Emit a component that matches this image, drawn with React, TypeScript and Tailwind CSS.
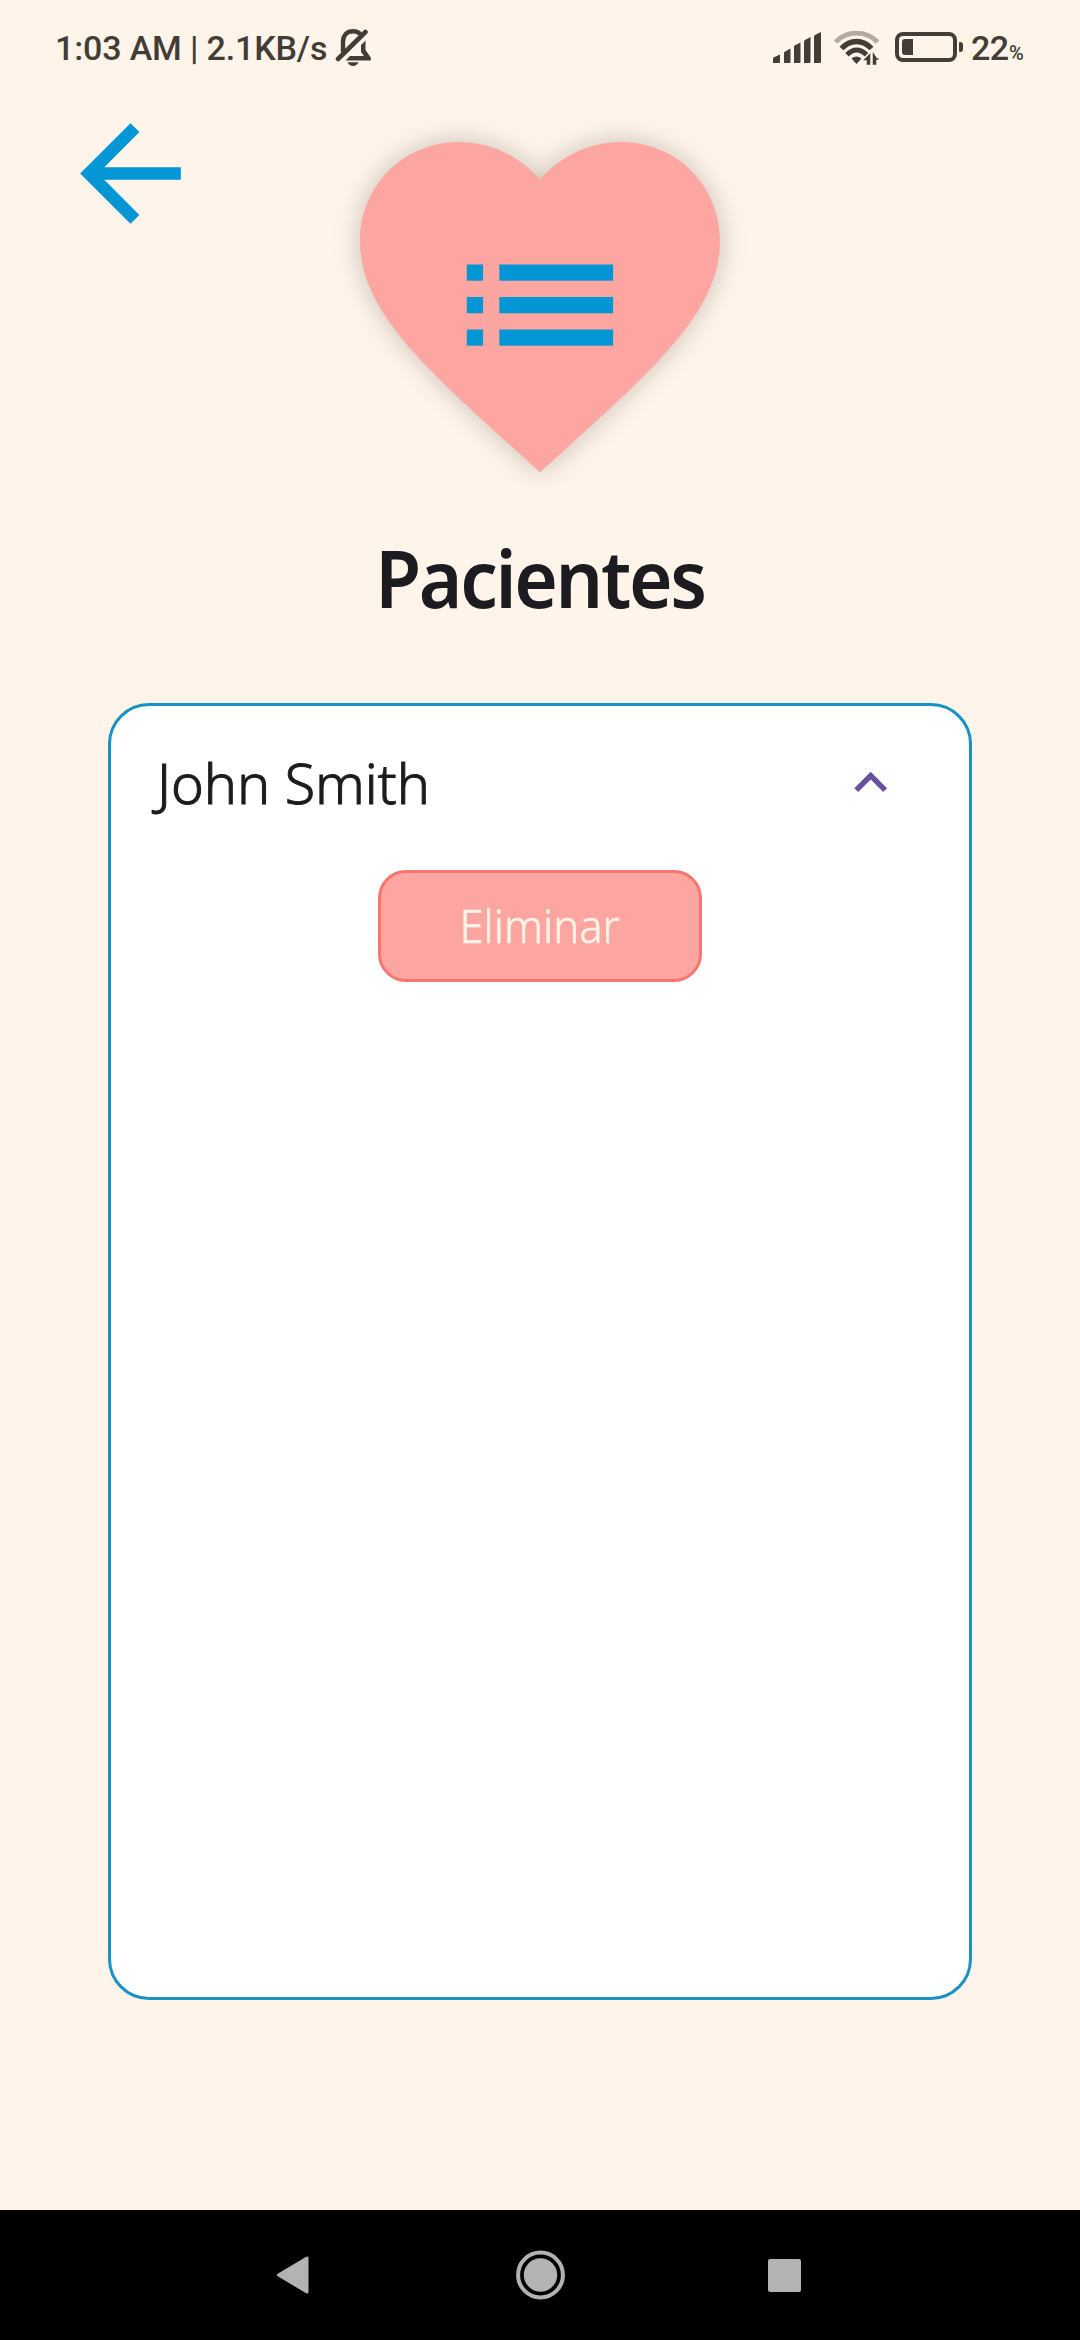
function MutedBell() {
  return (
    <svg className="block h-[40px] w-[37px]" viewBox="0 0 37 40" fill="none">
      <path d="M8 25V15C8 8 12 4.300 18 4.300c3 0 5.500 1 7.500 2.800" stroke="#423d36" strokeWidth="4.400" />
      <path d="M3 32L30.500 5" stroke="#423d36" strokeWidth="4.600" strokeLinecap="round" />
      <path d="M26 18L30.500 13.500V23l5.300 7.500V33.500H10.500l4.500-4.500H29l-3-4z" fill="#423d36" />
      <path d="M12.500 35.300h11c-1 2.400-3 3.700-5.500 3.700s-4.500-1.300-5.500-3.700z" fill="#423d36" />
    </svg>
  )
}

function Signal() {
  return (
    <svg className="block h-[31px] w-[48px]" viewBox="0 0 48 31" fill="#423d36">
      <path d="M0 31v-4q0-1.500 1.500-2l5.500-2.500V30q0 1-1 1z" />
      <path d="M11 31V21q0-1 1.500-1.800l5-2.700V30q0 1-1 1z" />
      <path d="M21 31V15q0-1 1-1.700l5.500-2.800V30q0 1-1 1z" />
      <path d="M31 31V10q0-1.500 1-2l5.500-3V30q0 1-1 1z" />
      <path d="M41 31V5q0-1.500 1-2l6-3V30q0 1-1 1z" />
    </svg>
  )
}

function Wifi() {
  return (
    <svg className="block h-[35px] w-[47px]" viewBox="0 0 47 35" fill="none">
      <path d="M2.500 12Q11 3.200 23.500 3.200Q36 3.200 44.500 12" stroke="#b5aaa2" strokeWidth="4.800" />
      <path d="M8.500 18.500Q15 11.500 23.500 11.500Q32 11.500 38.500 18.500" stroke="#423d36" strokeWidth="5.400" />
      <path d="M14 24.800Q18.500 20 23.500 20Q28.500 20 33.500 24.800" stroke="#423d36" strokeWidth="5" />
      <path d="M18.500 28.500Q23.500 24.500 28.500 28.500L23.500 34z" fill="#423d36" />
      <path d="M36.500 25v9h-2v-4.500h-2.500zM40.500 34v-9.500l3 4.500h2h-3v5z" fill="#423d36" stroke="#423d36" strokeWidth="1.500" />
    </svg>
  )
}

function StatusBar() {
  return (
    <header className="flex h-[96px] items-start justify-between pl-[55px] pr-[56px] font-['Roboto',sans-serif] font-medium text-[#423d36]">
      <div className="flex">
        <span className="mt-[28px] w-[280px] whitespace-pre text-[34px] leading-[40px] tracking-[-0.15px]">1:03 AM | 2.1KB/s</span>
        <div className="mt-[27px]"><MutedBell /></div>
      </div>
      <div className="flex">
        <div className="mt-[32px]"><Signal /></div>
        <div className="ml-[12px] mt-[30px]"><Wifi /></div>
        <div className="ml-[15px] mt-[32px] h-[30px] w-[62px] rounded-[8px] border-4 border-[#423d36] p-[3px]">
          <div className="h-[16px] w-[11px] rounded-l-[3px] bg-[#423d36]" />
        </div>
        <div className="ml-[2px] mt-[42px] h-[10px] w-[4px] rounded-r-[3px] rounded-l-[1px] bg-[#423d36]" />
        <span className="ml-[8px] mt-[28px] w-[38px] text-[34px] leading-[40px] tracking-[-0.5px]">22</span>
        <span className="mt-[41px] w-[15px] text-[20px] leading-[24px]">%</span>
      </div>
    </header>
  )
}

export default function App() {
  return (
    <div className="flex h-[2340px] w-[1080px] flex-col overflow-hidden bg-[#fff4e9] font-['Noto_Sans',sans-serif] text-[#1c1b1f]">
      <StatusBar />
      <div className="grid h-[424px] grid-cols-[324px_432px_324px]">
        <button aria-label="Volver" className="ml-[55px] mt-[2px] h-[151px] w-[151px]">
          <svg className="block size-full" viewBox="0 0 24 24" fill="#0396d4">
            <path d="M20 11H7.830l5.590-5.590L12 4l-8 8 8 8 1.410-1.410L7.830 13H20v-2z" />
          </svg>
        </button>
        <svg className="-mt-[8px] block size-[432px] overflow-visible" viewBox="0 0 24 24">
          <path
            className="[filter:drop-shadow(0_0.150px_0.700px_rgba(0,0,0,0.220))]"
            fill="#fda6a1"
            d="M12 21.350l-1.450-1.320C5.400 15.360 2 12.280 2 8.500 2 5.420 4.420 3 7.500 3c1.740 0 3.410.81 4.500 2.090C13.090 3.810 14.760 3 16.500 3 19.580 3 22 5.420 22 8.500c0 3.780-3.400 6.860-8.550 11.540L12 21.350z"
          />
          <g transform="translate(6.580 6.640) scale(0.4515)" fill="#0396d4">
            <path d="M3 13h2v-2H3v2zm0 4h2v-2H3v2zm0-8h2V7H3v2zm4 4h14v-2H7v2zm0 4h14v-2H7v2zM7 7v2h14V7H7z" />
          </g>
        </svg>
      </div>
      <h1 className="h-[183px] scale-x-[0.934] pt-[2px] text-center text-[80px] font-semibold leading-[110px] tracking-[-2.500px]">Pacientes</h1>
      <main className="ml-[108px] h-[1297px] w-[864px] shrink-0 rounded-[41px] border-[3px] border-[#1892c2] bg-white">
        <div className="flex h-[164px] justify-between pl-[46px] pr-[66px]">
          <span className="mt-[38px] origin-left scale-x-[0.994] whitespace-nowrap text-[56px] font-light leading-[76px] [-webkit-text-stroke:1px_#1c1b1f]">John Smith</span>
          <svg className="mt-[44px] block size-[65.400px]" viewBox="0 0 24 24" fill="#67509f">
            <path d="M12 8l-6 6 1.410 1.410L12 10.830l4.590 4.580L18 14z" />
          </svg>
        </div>
        <button className="mx-auto flex h-[112px] w-[324px] items-center justify-center rounded-[28px] border-[3px] border-[#f6766f] bg-[#fda6a1] text-[45px] font-light leading-[60px] text-[#fff3e8] [-webkit-text-stroke:0.6px_#fff3e8]">
          <span className="block scale-x-[0.970]">Eliminar</span>
        </button>
      </main>
      <nav className="mt-auto flex h-[130px] shrink-0 items-center bg-black">
        <svg className="ml-[276px] block h-[38px] w-[33px]" viewBox="0 0 33 38">
          <path d="M2.500 19L31 2v34z" fill="#b3b3b3" stroke="#b3b3b3" strokeWidth="3" strokeLinejoin="round" />
        </svg>
        <svg className="ml-[206px] block size-[50px]" viewBox="0 0 50 50">
          <circle cx="25.500" cy="25" r="22.400" fill="none" stroke="#b3b3b3" strokeWidth="4" />
          <circle cx="25.500" cy="25" r="16.700" fill="#b3b3b3" />
        </svg>
        <div className="ml-[203px] size-[33px] rounded-[2px] bg-[#b3b3b3]" />
      </nav>
    </div>
  )
}
